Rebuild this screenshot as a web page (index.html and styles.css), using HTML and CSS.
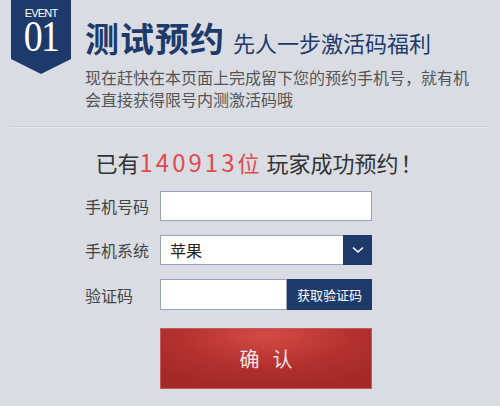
FILE: index.html
```html
<!DOCTYPE html>
<html lang="zh-CN">
<head>
<meta charset="utf-8">
<title>测试预约</title>
<link rel="stylesheet" href="styles.css">
</head>
<body>
<div class="page">
  <header class="header">
    <div class="badge">
      <span class="badge-event">EVENT</span>
      <span class="badge-num">01</span>
    </div>
    <div class="intro">
      <h1 class="title"><span class="title-main">测试预约</span><span class="title-sub">先人一步激活码福利</span></h1>
      <p class="desc">现在赶快在本页面上完成留下您的预约手机号，就有机会直接获得限号内测激活码哦</p>
    </div>
  </header>
  <div class="divider"></div>
  <p class="counter">已有<span class="num">140913</span><span class="unit">位</span>玩家成功预约<span class="bang">！</span></p>
  <form class="form">
    <label class="label">手机号码</label>
    <div class="field"></div>
    <label class="label">手机系统</label>
    <div class="field select">
      <span class="select-value">苹果</span>
      <span class="select-btn">
        <svg width="12" height="8" viewBox="0 0 12 8"><path d="M1 1.5 L6 6 L11 1.5" fill="none" stroke="#fff" stroke-width="1.6"/></svg>
      </span>
    </div>
    <label class="label">验证码</label>
    <div class="code-row">
      <div class="field code-input"></div>
      <span class="code-btn">获取验证码</span>
    </div>
    <div class="confirm">确认</div>
  </form>
</div>
</body>
</html>
```

FILE: styles.css
```css
html, body {
  margin: 0;
  padding: 0;
}
body {
  background: #d9dde3;
  font-family: "Noto Sans CJK SC", "Noto Sans", sans-serif;
  color: #444;
}
.page {
  width: 500px;
  height: 406px;
  overflow: hidden;
}
.header {
  display: flex;
  padding-left: 11px;
  height: 126px;
}
.badge {
  width: 60px;
  height: 74px;
  background: #1e3a6b;
  clip-path: polygon(0 0, 100% 0, 100% 59px, 50% 74px, 0 59px);
  display: flex;
  flex-direction: column;
  align-items: center;
  color: #fff;
}
.badge-event {
  font-family: "Liberation Sans", sans-serif;
  font-size: 11px;
  letter-spacing: -0.8px;
  line-height: 11px;
  margin-top: 8px;
}
.badge-num {
  font-family: "Liberation Serif", serif;
  font-size: 44px;
  line-height: 32px;
  margin-top: 2px;
  letter-spacing: -2px;
  transform: scaleX(0.86);
}
.intro {
  margin-left: 14px;
  margin-top: 21px;
}
.title {
  margin: 0;
  font-weight: normal;
  line-height: 34px;
  white-space: nowrap;
}
.title-main {
  font-size: 34px;
  font-weight: bold;
  color: #1e3a6b;
  letter-spacing: 1px;
}
.title-sub {
  font-size: 22px;
  color: #1e3a6b;
  margin-left: 8px;
}
.desc {
  margin: 7px 0 0;
  width: 395px;
  font-size: 16px;
  line-height: 22px;
  color: #555;
}
.divider {
  margin: 0 10px;
  height: 1px;
  background: #c6cad1;
  border-bottom: 1px solid #e6e8ec;
}
.counter {
  margin: 19px 0 0;
  padding-left: 18px;
  text-align: center;
  font-size: 22px;
  line-height: 30px;
  color: #333;
}
.num {
  color: #e24a4a;
  font-size: 24px;
  letter-spacing: 3px;
}
.unit {
  color: #e24a4a;
  margin-right: 7px;
}
.bang {
  display: inline-block;
  width: 24px;
  text-align: right;
}
.form {
  display: grid;
  grid-template-columns: 75px 212px;
  row-gap: 14px;
  padding-left: 85px;
  margin-top: 14px;
  align-items: center;
}
.label {
  font-size: 16px;
  color: #444;
  line-height: 30px;
}
.field {
  height: 30px;
  box-sizing: border-box;
  background: #fff;
  border: 1px solid #97a3b6;
}
.select {
  display: flex;
  align-items: center;
  justify-content: space-between;
}
.select-value {
  padding-left: 9px;
  font-size: 16px;
  color: #222;
}
.select-btn {
  width: 29px;
  height: 30px;
  margin: -1px -1px -1px 0;
  background: #1e3a6b;
  display: flex;
  align-items: center;
  justify-content: center;
}
.code-row {
  display: flex;
  height: 31px;
}
.code-input {
  width: 127px;
  height: 31px;
}
.code-btn {
  flex: 1;
  background: #1e3a6b;
  color: #fff;
  font-size: 13px;
  display: flex;
  align-items: center;
  justify-content: center;
}
.confirm {
  grid-column: 2;
  margin-top: 4px;
  height: 61px;
  box-sizing: border-box;
  border: 1px solid #c45a58;
  background: radial-gradient(ellipse 70% 90% at 50% 10%, #d44b46 0%, #b2312f 60%, #a32a29 100%);
  color: #f6e4e4;
  font-size: 20px;
  letter-spacing: 13px;
  text-indent: 13px;
  display: flex;
  align-items: center;
  justify-content: center;
}
```
